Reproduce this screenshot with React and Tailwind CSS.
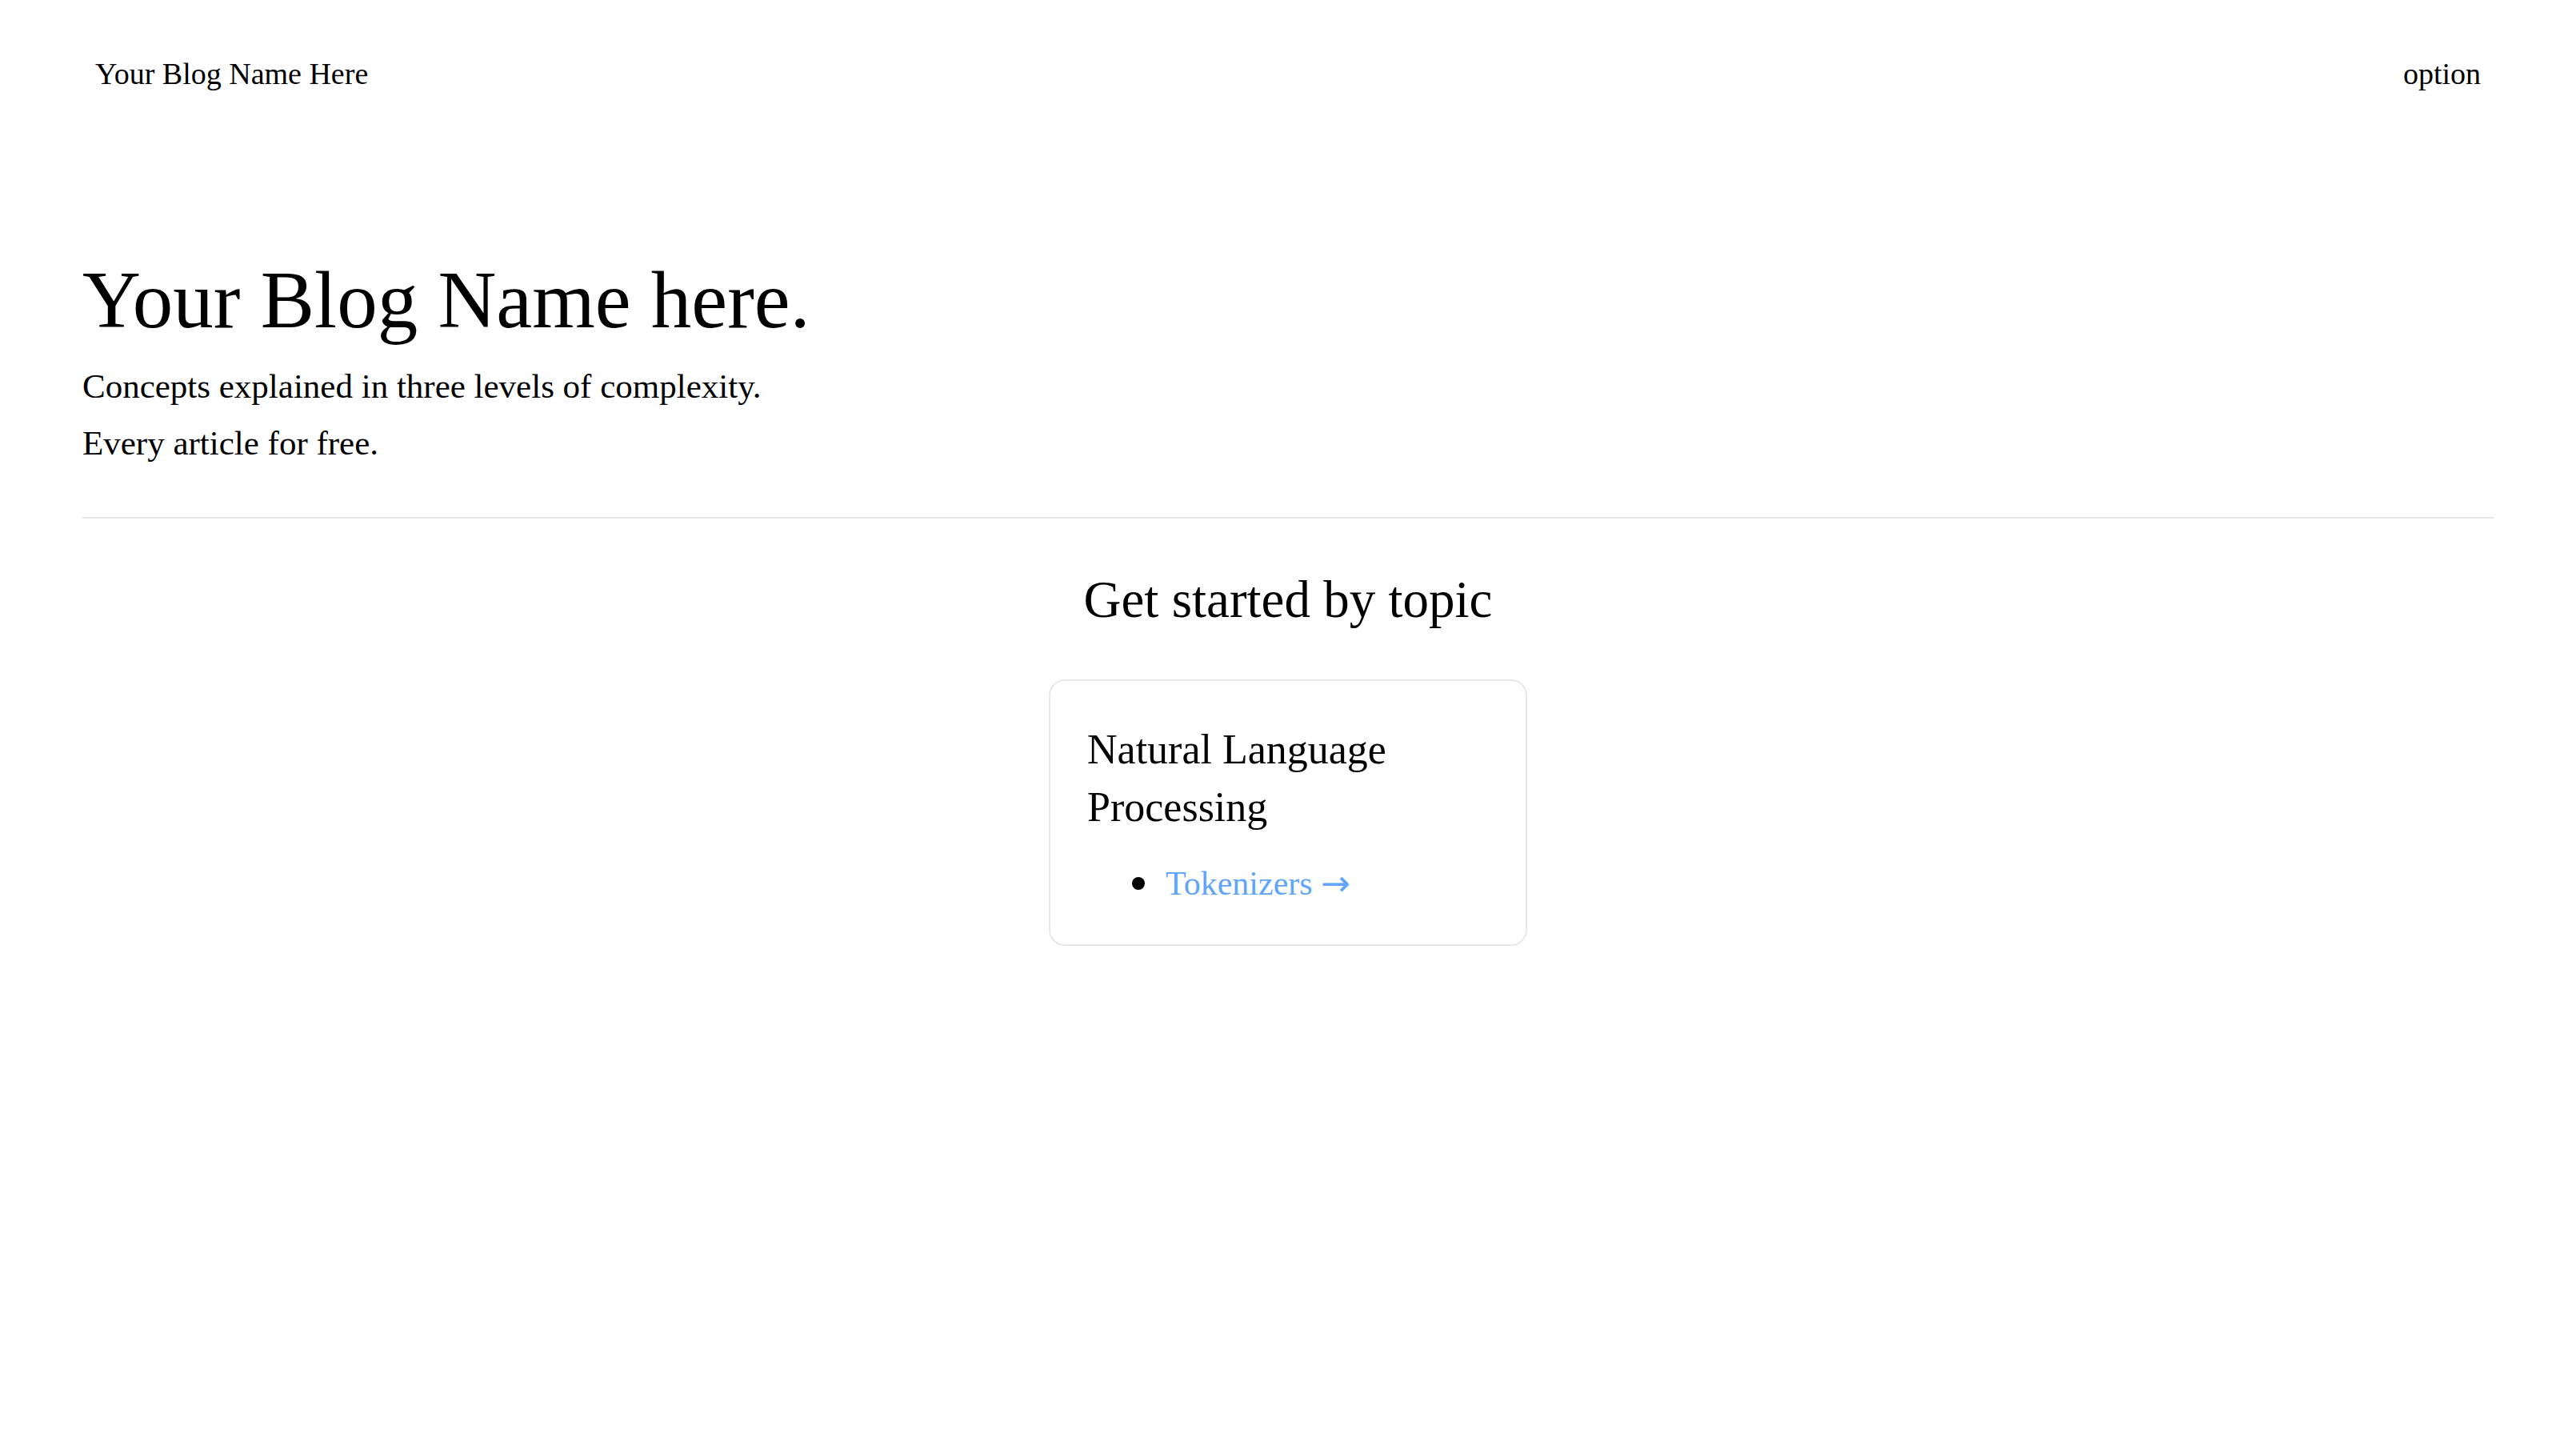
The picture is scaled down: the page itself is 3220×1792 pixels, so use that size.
import React from 'react';

// Темы и статьи на главной
const topics = [
    {
        title: 'Natural Language Processing',
        articles: [{ label: 'Tokenizers', href: '#' }],
    },
];

const Nav = () => (
    <nav className="flex items-center justify-between h-[184px] px-[119px] text-[38px] leading-none">
        <a href="#">Your Blog Name Here</a>
        <a href="#">option</a>
    </nav>
);

const Hero = () => (
    <header className="px-[103px] pt-[141px]">
        <h1 className="text-[101px] leading-[100px]">Your Blog Name here.</h1>
        <div className="mt-[22px] text-[43px] leading-[71px]">
            <p>Concepts explained in three levels of complexity.</p>
            <p>Every article for free.</p>
        </div>
    </header>
);

const TopicCard = ({ topic }) => (
    <div className="w-[598px] border-2 border-[#e8e8e8] rounded-[20px] pt-[50px] pb-[44px] px-[46px]">
        <h3 className="text-[52px] leading-[72px]">{topic.title}</h3>
        <ul className="mt-[27px] pl-[56px] text-[42px] leading-[64px]">
            {topic.articles.map((a) => (
                <li key={a.label} className="flex items-center gap-[26px]">
                    <span className="w-[16px] h-[16px] rounded-full bg-black shrink-0" />
                    <a href={a.href} className="text-[#60a5fa] flex items-center gap-[10px]">
                        {a.label}
                        <span className="font-['DejaVu_Sans',sans-serif] text-[44px] leading-none">→</span>
                    </a>
                </li>
            ))}
        </ul>
    </div>
);

export default function App() {
    return (
        <div className="min-h-screen bg-white text-black font-['Liberation_Serif',serif]">
            <Nav />
            <Hero />

            {/* Разделитель */}
            <hr className="mt-[57px] mx-[103px] border-0 border-t-2 border-[#e5e5ea]" />

            <section className="flex flex-col items-center pt-[65px]">
                <h2 className="text-[65px] leading-[72px]">Get started by topic</h2>
                <div className="mt-[64px] flex gap-12">
                    {topics.map((t) => (
                        <TopicCard key={t.title} topic={t} />
                    ))}
                </div>
            </section>
        </div>
    );
}
